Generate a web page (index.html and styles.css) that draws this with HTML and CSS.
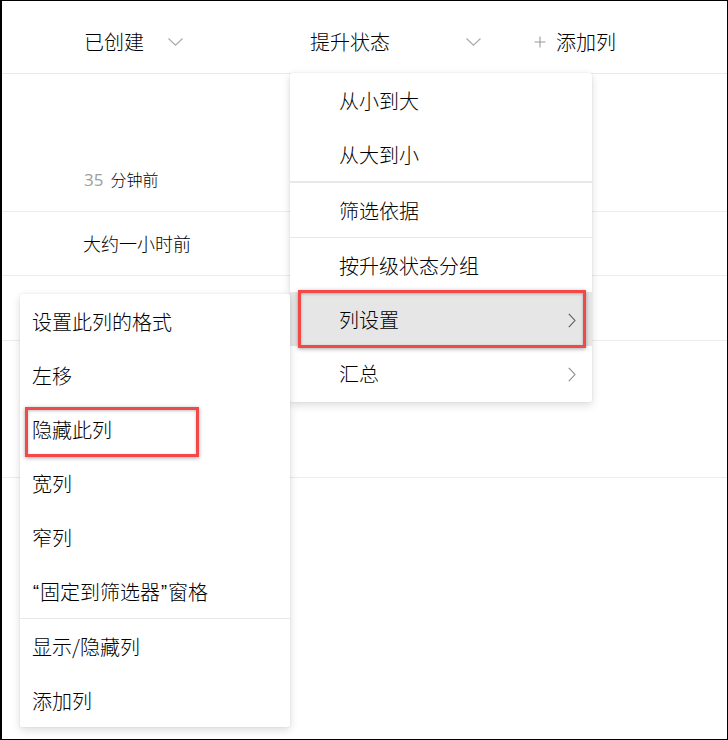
FILE: index.html
```html
<!DOCTYPE html>
<html lang="zh-CN">
<head>
<meta charset="utf-8">
<title>列设置</title>
<link rel="stylesheet" href="styles.css">
</head>
<body>
<div class="frame">
  <div class="header">
    <div class="col col-created">
      <span class="col-title">已创建</span>
      <svg class="chev-down chev-1" width="15" height="8" viewBox="0 0 15 8"><polyline points="0.5,0.5 7.5,7.2 14.5,0.5" fill="none" stroke="#a8a8a8" stroke-width="1.1"/></svg>
    </div>
    <div class="col col-status">
      <span class="col-title">提升状态</span>
      <svg class="chev-down chev-2" width="15" height="8" viewBox="0 0 15 8"><polyline points="0.5,0.5 7.5,7.2 14.5,0.5" fill="none" stroke="#a8a8a8" stroke-width="1.1"/></svg>
    </div>
    <div class="col col-add">
      <svg class="plus" width="12" height="12" viewBox="0 0 12 12"><path d="M6 0.5V11.5M0.5 6H11.5" stroke="#9c9c9c" stroke-width="1.1" fill="none"/></svg>
      <span class="col-title">添加列</span>
    </div>
  </div>
  <div class="row row-1"><span class="num">35</span><span class="cell-16">分钟前</span></div>
  <div class="row row-2"><span class="cell-18">大约一小时前</span></div>
  <div class="row row-3"></div>
  <div class="row row-4"></div>

  <div class="menu menu-main">
    <div class="item">从小到大</div>
    <div class="item">从大到小</div>
    <div class="sep sep-thick"></div>
    <div class="item">筛选依据</div>
    <div class="sep"></div>
    <div class="item">按升级状态分组</div>
    <div class="item item-active">
      <span>列设置</span>
      <svg class="chev-right" width="8" height="15" viewBox="0 0 8 15"><polyline points="0.8,0.8 7,7.5 0.8,14.2" fill="none" stroke="#5a5a5a" stroke-width="1.1"/></svg>
      <span class="mark mark-1"></span>
    </div>
    <div class="item">
      <span>汇总</span>
      <svg class="chev-right" width="8" height="15" viewBox="0 0 8 15"><polyline points="0.8,0.8 7,7.5 0.8,14.2" fill="none" stroke="#8a8a8a" stroke-width="1.1"/></svg>
    </div>
  </div>

  <div class="menu menu-sub">
    <div class="item">设置此列的格式</div>
    <div class="item">左移</div>
    <div class="item">隐藏此列<span class="mark mark-2"></span></div>
    <div class="item">宽列</div>
    <div class="item">窄列</div>
    <div class="item"><span class="q q-open">“</span>固定到筛选器<span class="q q-close">”</span>窗格</div>
    <div class="sep"></div>
    <div class="item">显示/隐藏列</div>
    <div class="item">添加列</div>
  </div>
</div>
</body>
</html>
```

FILE: styles.css
```css
* { box-sizing: border-box; }
html, body { margin: 0; padding: 0; background: #fff; }
body {
  font-family: "Noto Sans CJK SC", "Noto Sans", sans-serif;
  font-weight: 300;
  color: #000;
}
.frame {
  position: relative;
  width: 728px;
  height: 740px;
  border: 1px solid #000;
  border-left-width: 2px;
  overflow: hidden;
  background: #fff;
}
.header {
  display: flex;
  height: 73px;
  padding: 31px 0 0 82px;
  border-bottom: 1px solid #e9e9e9;
}
.col {
  display: flex;
  align-items: center;
  height: 20px;
  font-size: 20px;
  line-height: 20px;
}
.col-created { width: 226px; }
.col-status { width: 224px; }
.chev-1 { margin-left: 24px; }
.chev-2 { margin-left: 76px; }
.plus { margin-right: 10px; margin-top: -1px; }

.row { border-bottom: 1px solid #ececec; }
.row-1 { height: 138px; padding: 97px 0 0 82px; font-size: 16px; line-height: 16px; }
.row-2 { height: 64px; padding: 22px 0 0 81px; font-size: 18px; line-height: 18px; }
.row-3 { height: 65px; }
.row-4 { height: 137px; }
.num {
  color: #9d9d9d;
  font-family: "Open Sans", "Noto Sans", sans-serif;
  font-weight: 400;
  font-size: 17px;
  margin-right: 7px;
}

.menu {
  position: absolute;
  background: #fff;
  border-radius: 2px;
  box-shadow: 0 3px 8px rgba(0, 0, 0, 0.14), 0 0 2px rgba(0, 0, 0, 0.10);
  font-size: 20px;
  line-height: 20px;
}
.menu .item {
  position: relative;
  display: flex;
  align-items: center;
  height: 54px;
  padding-top: 2px;
}
.menu .sep { height: 1px; background: #e8e8e8; }
.menu .sep-thick { height: 2px; }

.menu-main {
  left: 288px;
  top: 72px;
  width: 302px;
  padding-bottom: 2px;
  z-index: 1;
}
.menu-main .item {
  padding-left: 49px;
  padding-right: 16px;
  justify-content: space-between;
}
.menu-main .item-active { background: #e6e6e6; }

.menu-sub {
  left: 18px;
  top: 293px;
  width: 270px;
  z-index: 2;
}
.menu-sub .item { padding-left: 12px; }

.q {
  font-family: "Liberation Sans", "Noto Sans", sans-serif;
  font-weight: 400;
  font-size: 18px;
}
.q-open { margin: 0 1px 0 1px; }
.q-close { margin: 0 1px 0 1px; }

.mark {
  position: absolute;
  border: 3px solid #f24848;
  box-shadow: 0 1px 4px rgba(0, 0, 0, 0.35), inset 0 1px 3px rgba(0, 0, 0, 0.25);
  pointer-events: none;
}
.mark-1 { left: 8px; right: 6px; top: -2px; bottom: -2px; }
.mark-2 { left: 5px; top: 5px; width: 174px; height: 50px; }
```
